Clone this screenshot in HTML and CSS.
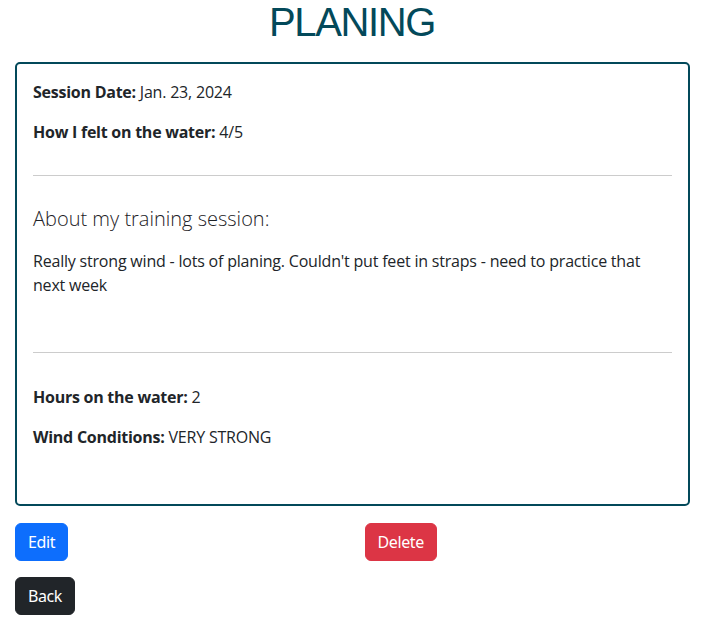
FILE: index.html
```html
<!DOCTYPE html>
<html lang="en">
<head>
<meta charset="utf-8">
<title>Planing</title>
<link rel="stylesheet" href="styles.css">
</head>
<body>
<h1 class="page-title">PLANING</h1>
<main class="wrap">
  <div class="session-card">
    <section class="sec sec-top">
      <p class="field"><b>Session Date:</b> Jan. 23, 2024</p>
      <p class="field"><b>How I felt on the water:</b> 4/5</p>
    </section>
    <hr class="divider">
    <section class="sec sec-about">
      <h2 class="about-title">About my training session:</h2>
      <p class="about-text">Really strong wind - lots of planing. Couldn't put feet in straps - need to practice that next week</p>
    </section>
    <hr class="divider">
    <section class="sec sec-bottom">
      <p class="field"><b>Hours on the water:</b> 2</p>
      <p class="field"><b>Wind Conditions:</b> VERY STRONG</p>
    </section>
  </div>
  <div class="actions">
    <div><a class="btn btn-edit" href="#">Edit</a></div>
    <div><a class="btn btn-delete" href="#">Delete</a></div>
  </div>
  <div class="back-row"><a class="btn btn-back" href="#">Back</a></div>
</main>
</body>
</html>
```
FILE: styles.css
```css
* { box-sizing: border-box; }
body {
  margin: 0;
  font-family: "Open Sans", "Noto Sans", sans-serif;
  font-size: 16px;
  line-height: 1.5;
  color: #212529;
  background: #fff;
}
.page-title {
  margin: 0 0 17px;
  font-family: "Liberation Sans", "Open Sans", sans-serif;
  font-size: 40px;
  line-height: 45px;
  font-weight: 400;
  letter-spacing: -1.4px;
  text-align: center;
  color: #03495a;
}
.wrap {
  width: 675px;
  margin-left: 15px;
}
.session-card {
  border: 2px solid #03495a;
  border-radius: 5px;
  padding: 16px;
  letter-spacing: -0.2px;
}
.sec p { margin: 0; }
.field + .field { margin-top: 16px; }
.sec-top { padding-bottom: 15px; }
.sec-about { padding-top: 15px; padding-bottom: 39px; }
.sec-bottom { padding-top: 16px; padding-bottom: 39px; }
.field b { font-weight: 700; letter-spacing: -0.25px; }
.divider {
  margin: 16px 0;
  border: 0;
  border-top: 1px solid #cccccc;
  height: 0;
}
.about-title {
  margin: 0 0 18px;
  font-size: 20px;
  line-height: 24px;
  font-weight: 300;
  letter-spacing: 0;
  color: #1d2226;
}
.about-text { margin: 0; }
.actions {
  margin-top: 17px;
  display: grid;
  grid-template-columns: 1fr 1fr;
  column-gap: 24px;
}
.back-row { margin-top: 16px; }
.btn {
  display: inline-block;
  padding: 6px 12px;
  border: 1px solid transparent;
  border-radius: 6px;
  font-family: "Noto Sans", "Open Sans", sans-serif;
  font-size: 16px;
  line-height: 24px;
  letter-spacing: -0.4px;
  color: #fff;
  text-decoration: none;
}
.btn-edit { background: #0d6efd; border-color: #0d6efd; }
.btn-delete { background: #dc3545; border-color: #dc3545; }
.btn-back { background: #212529; border-color: #212529; }
```
